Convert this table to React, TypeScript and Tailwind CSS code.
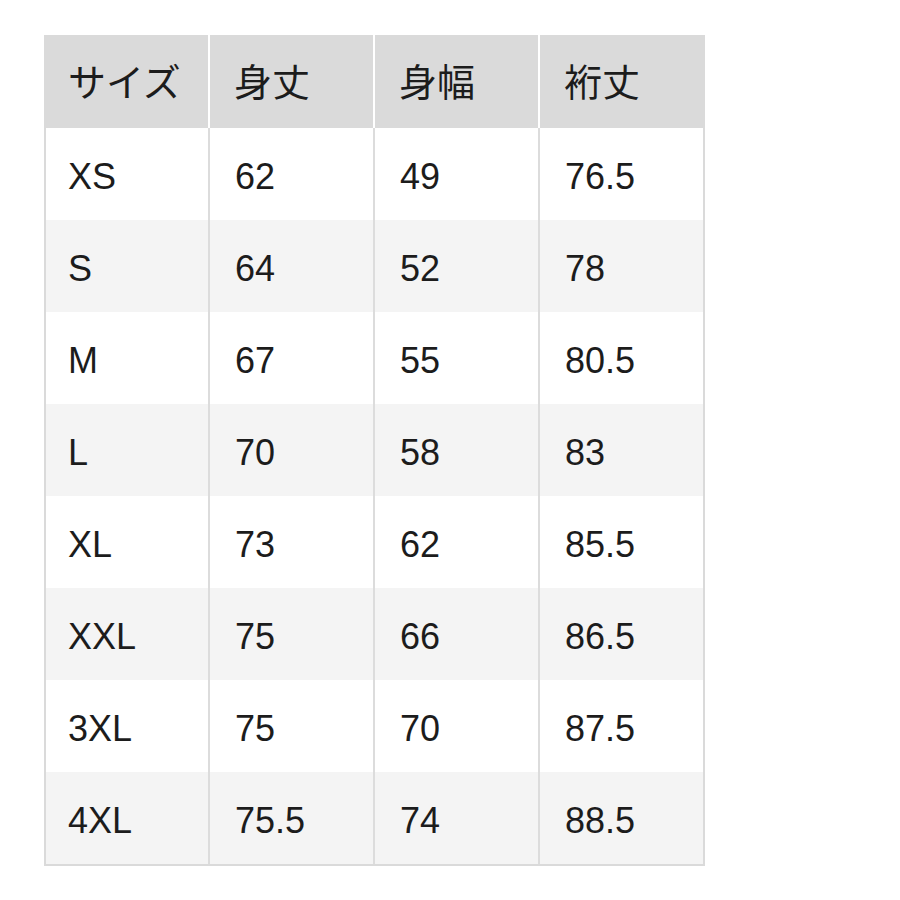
const headers = ["サイズ", "身丈", "身幅", "裄丈"];

const rows = [
  ["XS", "62", "49", "76.5"],
  ["S", "64", "52", "78"],
  ["M", "67", "55", "80.5"],
  ["L", "70", "58", "83"],
  ["XL", "73", "62", "85.5"],
  ["XXL", "75", "66", "86.5"],
  ["3XL", "75", "70", "87.5"],
  ["4XL", "75.5", "74", "88.5"],
];

export default function App() {
  return (
    <div
      className="w-[900px] h-[900px] bg-white pt-[35px] pl-[44px] text-[#1c1c1c]"
      style={{ fontFamily: '"Liberation Sans", "Noto Sans CJK JP", sans-serif' }}
    >
      <div className="w-[661px] border-x-2 border-b-2 border-[#dadada]">
        <div className="grid grid-cols-[162px_165px_165px_165px] h-[93px] bg-[#dadada]">
          {headers.map((h, i) => (
            <div
              key={h}
              className={`flex items-center pt-[3px] text-[38px] ${i > 0 ? "pl-[24px] border-l-2 border-white" : "pl-[22px]"}`}
            >
              {h}
            </div>
          ))}
        </div>
        {rows.map((r, ri) => (
          <div
            key={r[0]}
            className={`grid grid-cols-[162px_165px_165px_165px] h-[92px] ${ri % 2 === 1 ? "bg-[#f4f4f4]" : "bg-white"}`}
          >
            {r.map((c, ci) => (
              <div
                key={ci}
                className={`flex items-center pt-[5px] text-[36px] ${ci > 0 ? "pl-[25px] border-l-2 border-[#dcdcdc]" : "pl-[22px]"}`}
              >
                {c}
              </div>
            ))}
          </div>
        ))}
      </div>
    </div>
  );
}
